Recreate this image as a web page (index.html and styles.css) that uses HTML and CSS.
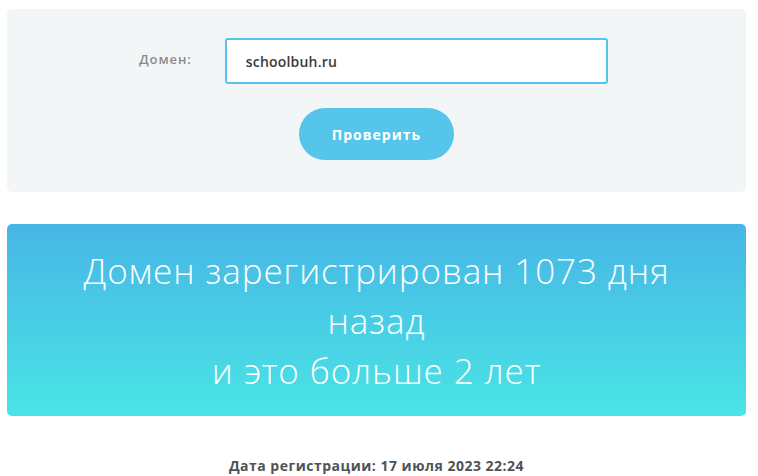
FILE: index.html
```html
<!DOCTYPE html>
<html lang="ru">
<head>
    <meta charset="UTF-8">
    <meta name="viewport" content="width=device-width, initial-scale=1.0">
    <title>Проверка возраста домена</title>
    <link rel="stylesheet" href="styles.css">
</head>
<body>
    <div class="container">
        <form class="check-form" onsubmit="return false;">
            <div class="form-row">
                <label for="domain" class="form-label">Домен:</label>
                <input type="text" id="domain" class="form-input" value="schoolbuh.ru">
            </div>
            <button type="submit" class="check-button">Проверить</button>
        </form>

        <div class="result">
            Домен зарегистрирован 1073 дня<br>
            назад<br>
            и это больше 2 лет
        </div>

        <p class="reg-date">Дата регистрации: 17 июля 2023 22:24</p>
    </div>
</body>
</html>
```

FILE: styles.css
```css
body {
    font-family: "Open Sans", "Noto Sans", sans-serif;
    margin: 0;
    padding: 0;
    background-color: #fff;
}

.container {
    margin: 9px 12px 0 7px;
}

.check-form {
    background-color: #f2f6f7;
    border-radius: 5px;
    padding: 29px 0 32px;
    display: flex;
    flex-direction: column;
    align-items: center;
    gap: 24px;
}

.form-row {
    display: flex;
    align-items: center;
    gap: 33px;
    margin-left: -6px;
}

.form-label {
    font-size: 13px;
    font-weight: 600;
    letter-spacing: 0.9px;
    color: #8a8a8a;
    margin-top: -4px;
}

.form-input {
    box-sizing: border-box;
    width: 383px;
    height: 46px;
    border: 2px solid #55c4ec;
    border-radius: 3px;
    padding: 0 19px;
    font-family: inherit;
    font-size: 14px;
    font-weight: 600;
    letter-spacing: 0.2px;
    color: #3a3a3a;
    background: #fff;
    outline: none;
}

.check-button {
    width: 155px;
    height: 52px;
    border: none;
    border-radius: 26px;
    background-color: #56c5ec;
    color: #fff;
    font-family: inherit;
    font-size: 14px;
    font-weight: 700;
    letter-spacing: 1px;
    cursor: pointer;
}

.result {
    margin-top: 32px;
    height: 192px;
    box-sizing: border-box;
    padding-top: 22px;
    border-radius: 5px;
    background: linear-gradient(to bottom, #47b6e5, #4ae4e6);
    color: #fff;
    text-align: center;
    font-size: 35px;
    font-weight: 300;
    letter-spacing: 0.9px;
    line-height: 50px;
}

.reg-date {
    margin: 40px 0 0;
    text-align: center;
    font-size: 14px;
    font-weight: 700;
    letter-spacing: 0.5px;
    color: #4f5357;
}
```
